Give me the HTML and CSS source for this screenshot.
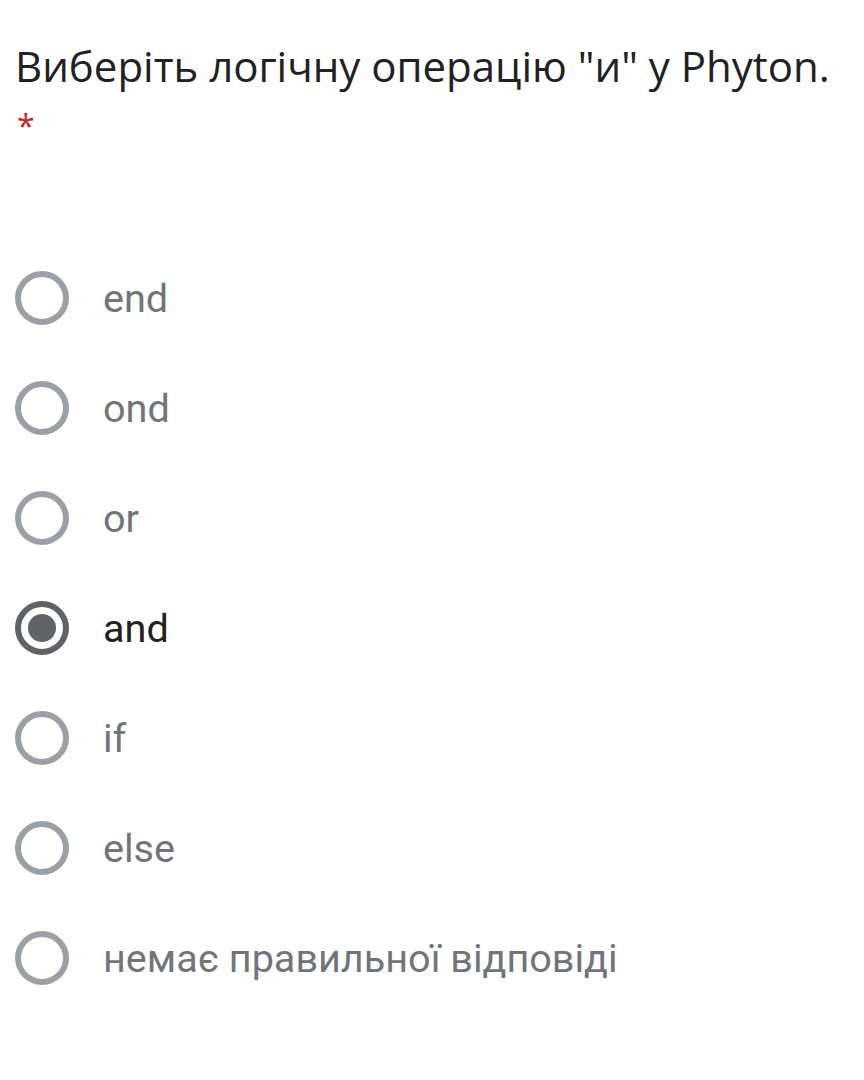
FILE: index.html
```html
<!DOCTYPE html>
<html lang="uk">
<head>
<meta charset="utf-8">
<link rel="stylesheet" href="styles.css">
</head>
<body>
<div class="question">
  <div class="title">Виберіть логічну операцію "и" у Phyton.</div>
  <div class="required">*</div>
</div>
<div class="options">
  <div class="option"><span class="radio"></span><span class="label">end</span></div>
  <div class="option"><span class="radio"></span><span class="label">ond</span></div>
  <div class="option"><span class="radio"></span><span class="label">or</span></div>
  <div class="option checked"><span class="radio"></span><span class="label">and</span></div>
  <div class="option"><span class="radio"></span><span class="label">if</span></div>
  <div class="option"><span class="radio"></span><span class="label">else</span></div>
  <div class="option"><span class="radio"></span><span class="label">немає правильної відповіді</span></div>
</div>
</body>
</html>
```
FILE: styles.css
```css
html, body {
  margin: 0;
  padding: 0;
  background: #ffffff;
}
body {
  width: 864px;
  height: 1080px;
  overflow: hidden;
}
.question {
  padding: 36px 0 0 15px;
}
.title {
  font-family: "Open Sans", sans-serif;
  font-size: 42px;
  line-height: 60px;
  color: #202124;
  white-space: nowrap;
}
.required {
  font-family: "Open Sans", sans-serif;
  font-size: 32px;
  line-height: 36px;
  color: #c5221f;
  margin-top: 12px;
  padding-left: 2px;
}
.options {
  display: flex;
  flex-direction: column;
  gap: 54px;
  padding: 126px 0 0 15px;
}
.option {
  display: flex;
  align-items: center;
  height: 56px;
  gap: 34px;
}
.radio {
  box-sizing: border-box;
  width: 54px;
  height: 54px;
  border: 6px solid #9aa0a6;
  border-radius: 50%;
  flex: none;
  display: flex;
  align-items: center;
  justify-content: center;
}
.checked .radio {
  border-color: #5f6368;
}
.checked .radio::after {
  content: "";
  width: 28px;
  height: 28px;
  border-radius: 50%;
  background: #5f6368;
}
.label {
  font-family: Roboto, sans-serif;
  font-size: 39.6px;
  color: #70757a;
}
.checked .label {
  color: #202124;
}
```
